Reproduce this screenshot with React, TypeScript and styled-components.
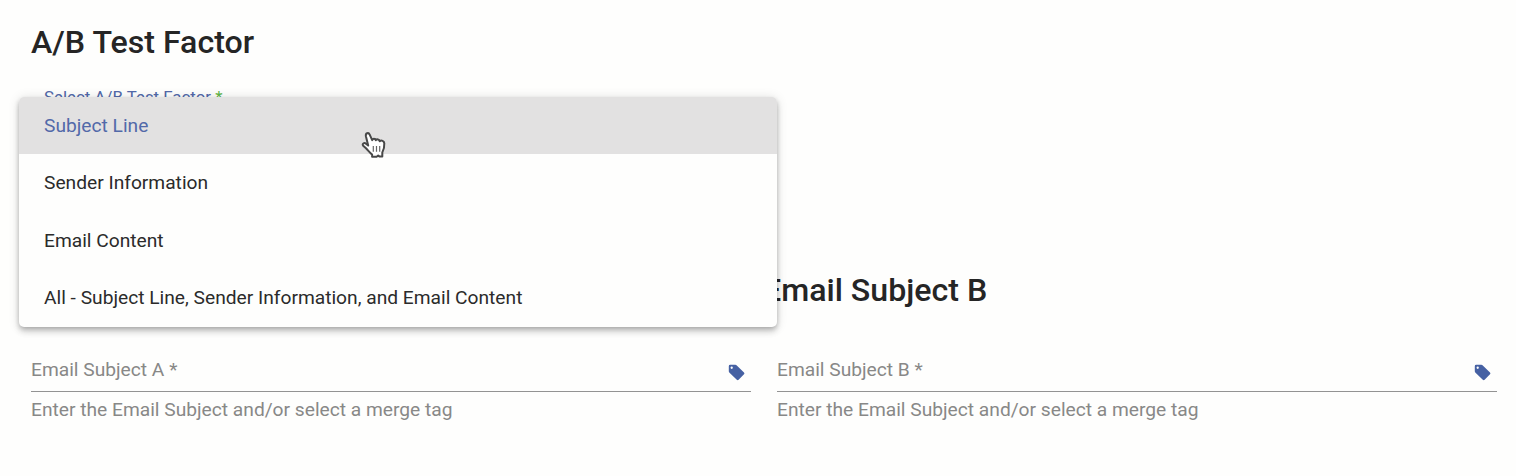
import React from "react";
import styled, { createGlobalStyle } from "styled-components";

const GlobalStyle = createGlobalStyle`
  * { box-sizing: border-box; }
  body {
    margin: 0;
    background: #fefefd;
    color: #252525;
    font-family: Roboto, "Liberation Sans", sans-serif;
    overflow: hidden;
  }
`;

const Page = styled.main`
  position: relative;
  height: 476px;
  padding: 22px 19px 0 31px;
  display: flex;
  flex-direction: column;
`;

const Heading = styled.h2<{ $outdent?: boolean }>`
  margin: 0 0 0 ${(p) => (p.$outdent ? "-14px" : "0")};
  font-size: 32.15px;
  line-height: 40px;
  font-weight: 500;
  white-space: nowrap;
`;

const SelectField = styled.div`
  height: 184px;
  margin-top: 24px;
  padding: 0 13px;
`;

const FloatingLabel = styled.label`
  display: block;
  font-size: 16.85px;
  line-height: 23px;
  color: #5269a9;
`;

const Required = styled.span`
  color: #5fb548;
`;

const Columns = styled.div`
  display: grid;
  grid-template-columns: 720px 720px;
  column-gap: 26px;
  align-items: end;
`;

const Column = styled.section`
  display: flex;
  flex-direction: column;
`;

const Field = styled.div`
  display: flex;
  align-items: center;
  justify-content: space-between;
  height: 44px;
  margin-top: 38px;
  padding-right: 6px;
  border-bottom: 1px solid #939393;
`;

const FieldLabel = styled.label`
  font-size: 19.2px;
  line-height: 24px;
  color: #888887;
`;

const Hint = styled.p`
  margin: 6px 0 0;
  font-size: 19.2px;
  line-height: 24px;
  color: #888887;
`;

const TagSvg = styled.svg`
  display: block;
  width: 17px;
  height: 17px;
  margin-top: 5px;
`;

const Menu = styled.ul`
  position: absolute;
  left: 18.5px;
  top: 96.5px;
  width: 758.5px;
  height: 230.5px;
  margin: 0;
  padding: 0;
  list-style: none;
  display: grid;
  grid-template-rows: repeat(4, 57.5px);
  overflow: hidden;
  border-radius: 5px;
  background: #fefefd;
  box-shadow: 0 2px 5px -1px rgba(0, 0, 0, 0.22), 0 5px 6px rgba(0, 0, 0, 0.14),
    0 1px 12px rgba(0, 0, 0, 0.12);
`;

const Option = styled.li<{ $active?: boolean }>`
  display: flex;
  align-items: center;
  padding: 0 25.5px 0.4px;
  font-size: 19.2px;
  color: ${(p) => (p.$active ? "#5269a9" : "#2b2b2b")};
  background: ${(p) => (p.$active ? "#e2e1e1" : "transparent")};
`;

const Pointer = styled.svg`
  position: absolute;
  left: 361px;
  top: 131px;
  width: 26px;
  height: 28px;
`;

const TagIcon = () => (
  <TagSvg viewBox="0 0 17 17" aria-hidden="true">
    <path
      fill="#4661a3"
      fillRule="evenodd"
      d="M2.2.8H7.3Q8.2.8 8.8 1.4L16 8.4Q16.9 9.3 16 10.2L10.6 15.8Q9.7 16.7 8.8 15.8L1.5 8.8Q.8 8.1.8 7.3V2.2Q.8.8 2.2.8ZM3.7 2.6A1.15 1.15 0 1 0 3.7 4.9A1.15 1.15 0 1 0 3.7 2.6Z"
    />
  </TagSvg>
);

const options = [
  "Subject Line",
  "Sender Information",
  "Email Content",
  "All - Subject Line, Sender Information, and Email Content",
];

const subjects = [
  { variant: "A", heading: "" },
  { variant: "B", heading: "Email Subject B" },
];

export default function App() {
  return (
    <>
      <GlobalStyle />
      <Page>
        <Heading>A/B Test Factor</Heading>
        <SelectField>
          <FloatingLabel>
            Select A/B Test Factor <Required>*</Required>
          </FloatingLabel>
        </SelectField>
        <Columns>
          {subjects.map(({ variant, heading }) => (
            <Column key={variant}>
              {heading && <Heading $outdent>{heading}</Heading>}
              <Field>
                <FieldLabel>Email Subject {variant} *</FieldLabel>
                <TagIcon />
              </Field>
              <Hint>Enter the Email Subject and/or select a merge tag</Hint>
            </Column>
          ))}
        </Columns>
        <Menu>
          {options.map((label, i) => (
            <Option key={label} $active={i === 0}>
              {label}
            </Option>
          ))}
        </Menu>
        <Pointer viewBox="0 0 26 28" aria-hidden="true">
          <path
            fill="#fff"
            stroke="#484848"
            strokeWidth="2"
            strokeLinejoin="round"
            d="M7.2 14.5L4.9 5.2C4.3 2.2 7.5 1 8.7 3.6L11.2 9.2C11.8 7.3 14.2 7.4 14.8 9.2C15.8 7.8 18.2 8.2 18.7 10.2C20.3 8.8 23.2 9.8 23.3 12.4C23.5 16 22.8 18.8 21.3 21.5V25.6H18.6L17.2 24.5L15.6 25.8H11.1V23.6C8.9 21.9 7 19.3 5 17.3L2.2 14.8C.6 12.9 3.2 11.1 5 12.7Z"
          />
          <path stroke="#666" strokeWidth="1.2" fill="none" d="M12.3 15V20.7M15.5 15V20.7M18.7 15V20.7" />
        </Pointer>
      </Page>
    </>
  );
}
